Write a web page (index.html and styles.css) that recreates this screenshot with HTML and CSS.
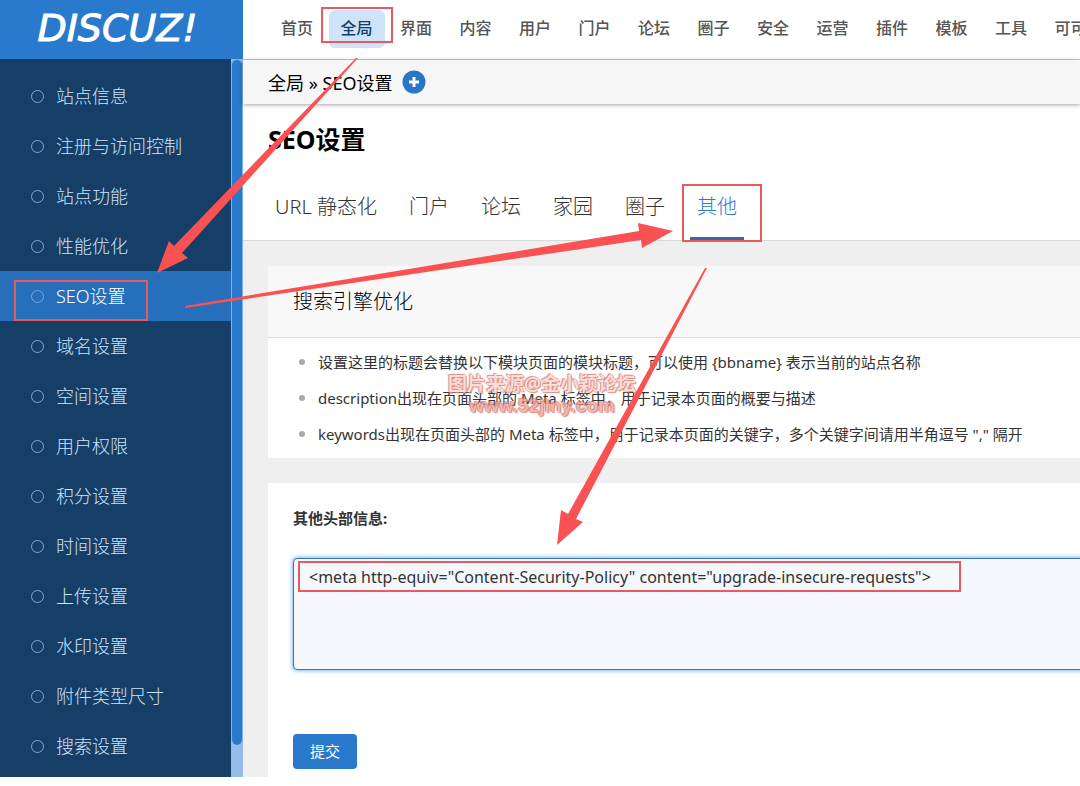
FILE: index.html
```html
<!DOCTYPE html>
<html lang="zh-CN">
<head>
<meta charset="utf-8">
<title>SEO设置 - Discuz!</title>
<link rel="stylesheet" href="styles.css">
</head>
<body>
<div class="app">
  <aside class="sidebar">
    <a class="logo" href="#">DISCUZ!</a>
    <div class="side-body">
      <nav class="menu" aria-label="全局">
        <a href="#">站点信息</a>
        <a href="#">注册与访问控制</a>
        <a href="#">站点功能</a>
        <a href="#">性能优化</a>
        <a href="#" class="current">SEO设置</a>
        <a href="#">域名设置</a>
        <a href="#">空间设置</a>
        <a href="#">用户权限</a>
        <a href="#">积分设置</a>
        <a href="#">时间设置</a>
        <a href="#">上传设置</a>
        <a href="#">水印设置</a>
        <a href="#">附件类型尺寸</a>
        <a href="#">搜索设置</a>
      </nav>
      <div class="track"><div class="thumb"></div></div>
    </div>
  </aside>
  <main class="main">
    <nav class="topnav" aria-label="主导航">
      <a href="#">首页</a>
      <a href="#" class="current">全局</a>
      <a href="#">界面</a>
      <a href="#">内容</a>
      <a href="#">用户</a>
      <a href="#">门户</a>
      <a href="#">论坛</a>
      <a href="#">圈子</a>
      <a href="#">安全</a>
      <a href="#">运营</a>
      <a href="#">插件</a>
      <a href="#">模板</a>
      <a href="#">工具</a>
      <a href="#">可可</a>
    </nav>
    <div class="crumbs">
      <span>全局 » SEO设置</span>
      <button class="add" type="button" aria-label="添加">
        <svg viewBox="0 0 24 24" width="24" height="24"><circle cx="12" cy="12" r="11.5" fill="#2a76c6"/><path d="M12 7v10M7 12h10" stroke="#fff" stroke-width="3"/></svg>
      </button>
    </div>
    <header class="heading">
      <h1>SEO设置</h1>
      <nav class="tabs" aria-label="SEO设置">
        <a href="#">URL 静态化</a>
        <a href="#">门户</a>
        <a href="#">论坛</a>
        <a href="#">家园</a>
        <a href="#">圈子</a>
        <a href="#" class="current">其他</a>
      </nav>
    </header>
    <div class="content">
      <section class="card tips">
        <h2>搜索引擎优化</h2>
        <ul>
          <li>设置这里的标题会替换以下模块页面的模块标题，可以使用 {bbname} 表示当前的站点名称</li>
          <li>description出现在页面头部的 Meta 标签中，用于记录本页面的概要与描述</li>
          <li>keywords出现在页面头部的 Meta 标签中，用于记录本页面的关键字，多个关键字间请用半角逗号 "," 隔开</li>
        </ul>
      </section>
      <form class="card form">
        <label for="head">其他头部信息:</label>
        <textarea id="head" spellcheck="false">&lt;meta http-equiv="Content-Security-Policy" content="upgrade-insecure-requests"&gt;</textarea>
        <button class="submit" type="button">提交</button>
      </form>
    </div>
  </main>
  <div class="watermark"><span>图片来源@金小颖论坛</span><span class="site">www.52jiny.com</span></div>
  <svg class="marks" width="1080" height="786" viewBox="0 0 1080 786" aria-hidden="true">
    <g fill="none" stroke="#e85a60" stroke-width="2">
      <rect x="322" y="8" width="70" height="34"/>
      <rect x="15" y="281" width="132" height="39"/>
      <rect x="683" y="185" width="78" height="56"/>
      <rect x="299" y="562" width="661" height="29"/>
    </g>
    <g fill="#fa5252">
      <path d="M356 58L174 246L169 241L157 273L188 258L182 253L358 58z"/>
      <path d="M185 306L639 231L638 223L673 231L642 248L641 240L185 308z"/>
      <path d="M705 268L568 514L561 510L557 545L583 522L576 519L707 268z"/>
    </g>
  </svg>
</div>
</body>
</html>
```
FILE: styles.css
```css
*,
*::before {
  box-sizing: border-box;
}

body {
  margin: 0;
  background: #fff;
  color: #333;
  font-family: "Noto Sans", "Noto Sans CJK SC", sans-serif;
  font-size: 15px;
  font-weight: 400;
}

a {
  color: inherit;
  text-decoration: none;
}

.app {
  position: relative;
  display: flex;
  overflow: hidden;
}

.sidebar {
  flex: 0 0 243px;
  display: flex;
  flex-direction: column;
  background: #163f68;
}

.logo {
  display: flex;
  align-items: center;
  justify-content: center;
  height: 59px;
  padding: 0 8px 4px 0;
  background: #2979cc;
  color: #fff;
  font-family: "DejaVu Sans", sans-serif;
  font-size: 38px;
  font-style: italic;
  font-weight: 400;
  -webkit-text-stroke: 1px #fff;
}

.side-body {
  flex: 1;
  display: flex;
}

.menu {
  flex: 1;
  padding: 12px 0 6px;
}

.menu a {
  display: flex;
  align-items: center;
  gap: 12px;
  height: 50px;
  padding: 0 0 2px 31px;
  color: #cfe2f7;
  font-size: 18px;
  font-weight: 300;
}

.menu a::before {
  content: "";
  width: 13px;
  height: 13px;
  margin-top: 2px;
  border: 1px solid #7fa9d4;
  border-radius: 50%;
}

.menu .current {
  background: #276fba;
  color: #fff;
}

.track {
  width: 12px;
  padding-bottom: 32px;
  background: #94bce8;
}

.thumb {
  height: 100%;
  border: 1px solid #7fb2e8;
  border-bottom: 0;
  border-radius: 6px;
  background: #2979cc;
}

.main {
  flex: 1;
  min-width: 0;
  display: flex;
  flex-direction: column;
}

.topnav {
  height: 60px;
  padding: 10px 0 0 26px;
  border-bottom: 1px solid #c8c8c8;
  overflow: hidden;
  white-space: nowrap;
  font-family: Roboto, sans-serif;
  font-size: 14px;
}

.topnav a {
  display: inline-block;
  padding: 0 12px 4px;
  border-radius: 6px;
  color: #555;
  font-family: "Noto Sans CJK SC", sans-serif;
  font-size: 16px;
  font-weight: 500;
  line-height: 34px;
}

.topnav .current {
  background: #cfe3fa;
  color: #163f68;
}

.crumbs {
  display: flex;
  align-items: center;
  gap: 10px;
  height: 44px;
  padding: 0 0 1px 25px;
  background: #f6f6f6;
  box-shadow: 0 1px 4px rgba(0, 0, 0, 0.35);
  color: #000;
  font-size: 18px;
}

.add {
  display: flex;
  padding: 0;
  border: 0;
  background: none;
}

.heading {
  padding: 17px 25px 0;
  border-bottom: 1px solid #d8d8d8;
}

h1 {
  margin: 0 0 17px;
  color: #000;
  font-size: 25px;
  font-weight: 700;
  line-height: 36px;
}

.tabs {
  display: flex;
  gap: 18px;
}

.tabs a {
  height: 66px;
  padding: 0 7px;
  border-bottom: 3px solid transparent;
  font-size: 20px;
  font-weight: 300;
  line-height: 66px;
}

.tabs .current {
  border-color: #3a68a4;
  color: #2979cc;
}

.content {
  flex: 1;
  display: flex;
  flex-direction: column;
  gap: 25px;
  width: calc(100% + 60px);
  padding: 25px 25px 0;
  background: #efefef;
}

.card {
  background: #fff;
}

h2 {
  margin: 0;
  padding: 0 25px;
  border-bottom: 1px solid #ddd;
  background: #f8f8f8;
  color: #000;
  font-size: 20px;
  font-weight: 300;
  line-height: 71px;
}

.tips ul {
  margin: 0;
  padding: 6px 0 6px 31px;
  list-style: none;
}

.tips li {
  display: flex;
  align-items: center;
  gap: 13px;
  line-height: 36px;
}

.tips li::before {
  content: "";
  width: 6px;
  height: 6px;
  border-radius: 50%;
  background: #aaa;
}

.form {
  flex: 1;
  display: flex;
  flex-direction: column;
  align-items: flex-start;
  padding: 24px 25px 8px;
}

.form label {
  margin-bottom: 29px;
  font-weight: 700;
  line-height: 22px;
}

.form textarea {
  width: 100%;
  height: 112px;
  margin-bottom: 64px;
  padding: 8px 15px;
  border: 1px solid #3a78ad;
  border-radius: 4px;
  outline: 0;
  resize: none;
  background: #f4f8fc;
  box-shadow: 0 0 5px #4f9be0;
  color: #333;
  font: inherit;
  font-size: 16px;
  line-height: 20px;
}

.submit {
  padding: 0 17px;
  border: 0;
  border-radius: 4px;
  background: #2979cc;
  color: #fff;
  font: inherit;
  line-height: 35px;
}

.watermark {
  position: absolute;
  top: 373px;
  left: 448px;
  display: flex;
  flex-direction: column;
  align-items: center;
  color: #f8d8d0;
  font-size: 19px;
  font-weight: 700;
  line-height: 22px;
  text-shadow: 0 0 1px #c84a40, 1px 1px 1px #d8766c, -1px -1px 1px #d8766c;
  opacity: 0.8;
}

.watermark .site {
  color: #eca79f;
  font-family: "Liberation Sans", sans-serif;
}

.marks {
  position: absolute;
  top: 0;
  left: 0;
  pointer-events: none;
}
```
